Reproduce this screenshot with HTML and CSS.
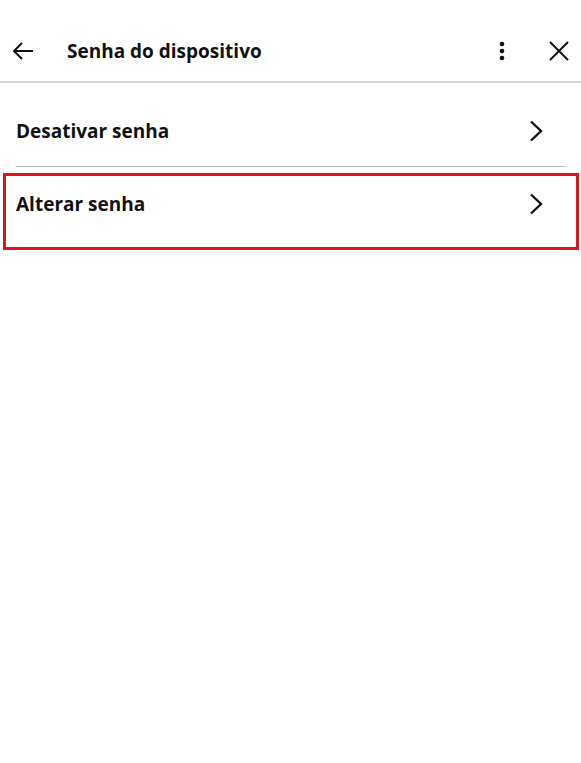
FILE: index.html
```html
<!DOCTYPE html>
<html lang="pt">
<head>
  <meta charset="UTF-8" />
  <meta name="viewport" content="width=device-width, initial-scale=1.0" />
  <title>Senha do dispositivo</title>
  <link rel="stylesheet" href="styles.css">
</head>
<body>
  <!-- Barra superior -->
  <div class="topbar">
    <button class="icon-btn back-btn" aria-label="Voltar">
      <svg width="22" height="20" viewBox="0 0 22 20">
        <path d="M21 10H2M10 2L2 10l8 8" fill="none" stroke="#111" stroke-width="2"/>
      </svg>
    </button>
    <h1 class="title">Senha do dispositivo</h1>
    <button class="icon-btn more-btn" aria-label="Mais opções">
      <svg width="6" height="20" viewBox="0 0 6 20">
        <circle cx="3" cy="3" r="2.3" fill="#111"/>
        <circle cx="3" cy="10" r="2.3" fill="#111"/>
        <circle cx="3" cy="17" r="2.3" fill="#111"/>
      </svg>
    </button>
    <button class="icon-btn close-btn" aria-label="Fechar">
      <svg width="20" height="20" viewBox="0 0 20 20">
        <path d="M1 1l18 18M19 1L1 19" fill="none" stroke="#111" stroke-width="2"/>
      </svg>
    </button>
  </div>

  <!-- Opções -->
  <div class="list">
    <div class="row first">
      <span class="row-label">Desativar senha</span>
      <svg class="chevron" width="14" height="22" viewBox="0 0 14 22">
        <path d="M2 1.5l10 9.5-10 9.5" fill="none" stroke="#111" stroke-width="2.4"/>
      </svg>
    </div>
    <div class="row selected">
      <span class="row-label">Alterar senha</span>
      <svg class="chevron" width="14" height="22" viewBox="0 0 14 22">
        <path d="M2 1.5l10 9.5-10 9.5" fill="none" stroke="#111" stroke-width="2.4"/>
      </svg>
    </div>
  </div>
</body>
</html>
```

FILE: styles.css
```css
body {
  margin: 0;
  padding: 0;
  background: #fff;
  color: #111;
  font-family: 'Open Sans', 'Noto Sans', sans-serif;
}

.topbar {
  height: 83px;
  display: flex;
  align-items: center;
  border-bottom: 2px solid #d6d6d6;
  padding-top: 20px;
  box-sizing: border-box;
}

.icon-btn {
  background: none;
  border: none;
  padding: 0;
  display: flex;
  align-items: center;
  justify-content: center;
  cursor: pointer;
}

.back-btn {
  margin-left: 12px;
}

.title {
  flex: 1;
  margin: 0 0 0 33px;
  font-size: 19px;
  font-weight: 700;
  line-height: 26px;
}

.more-btn {
  margin-right: 44px;
}

.close-btn {
  margin-right: 12px;
}

.list {
  display: flex;
  flex-direction: column;
}

.row {
  display: flex;
  align-items: center;
  justify-content: space-between;
}

.row-label {
  font-size: 19px;
  font-weight: 700;
  line-height: 26px;
}

.row.first {
  height: 84px;
  margin: 0 15px 0 16px;
  padding-top: 12px;
  box-sizing: border-box;
  border-bottom: 1px solid #bdbdbd;
}

.row.first .chevron {
  margin-right: 23px;
}

.row.selected {
  height: 77px;
  margin: 6px 2px 0 3px;
  padding: 0 0 16px 10px;
  box-sizing: border-box;
  border: 3px solid #e0141c;
}

.row.selected .chevron {
  margin-right: 33px;
}
```
